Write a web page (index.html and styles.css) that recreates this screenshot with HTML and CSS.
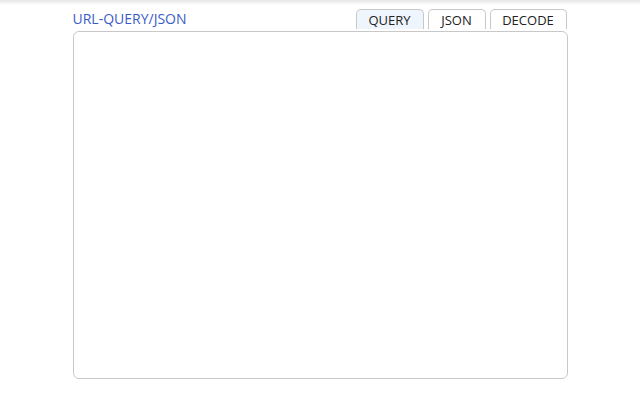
FILE: index.html
```html
<!DOCTYPE html>
<html>
<head>
    <link rel="stylesheet" href="styles.css">
</head>
<body>
    <div class="top-shadow"></div>
    <div class="panel">
        <div class="panel-header">
            <span class="panel-title">URL-QUERY/JSON</span>
            <div class="tabs">
                <button class="tab tab-query active">QUERY</button>
                <button class="tab tab-json">JSON</button>
                <button class="tab tab-decode">DECODE</button>
            </div>
        </div>
        <textarea class="editor"></textarea>
    </div>
</body>
</html>
```

FILE: styles.css
```css
body {
    margin: 0;
    background: #fff;
    font-family: "Open Sans", "Noto Sans", sans-serif;
}

.top-shadow {
    height: 5px;
    background: linear-gradient(#e6e6e6, #fff);
}

.panel {
    width: 495px;
    margin: 0 auto;
    padding-top: 4px;
}

.panel-header {
    display: flex;
    align-items: flex-start;
    justify-content: space-between;
    height: 21px;
}

.panel-title {
    color: #3b5bc8;
    font-size: 14px;
    line-height: 20px;
    padding-top: 0;
}

.tabs {
    display: flex;
    gap: 4px;
    margin-right: 1px;
}

.tab {
    height: 20px;
    padding: 0;
    background: #fff;
    border: 1px solid #c8c8c8;
    border-bottom: none;
    border-radius: 5px 5px 0 0;
    font-family: inherit;
    font-size: 13px;
    color: #222;
    line-height: 18px;
    cursor: pointer;
}

.tab-query {
    width: 68px;
}

.tab-json {
    width: 58px;
}

.tab-decode {
    width: 77px;
}

.tab.active {
    background: #eef5fc;
}

.editor {
    display: block;
    box-sizing: border-box;
    width: 495px;
    height: 348px;
    margin-top: 1px;
    border: 1px solid #c8c8c8;
    border-radius: 6px;
    resize: none;
    outline: none;
}
```
